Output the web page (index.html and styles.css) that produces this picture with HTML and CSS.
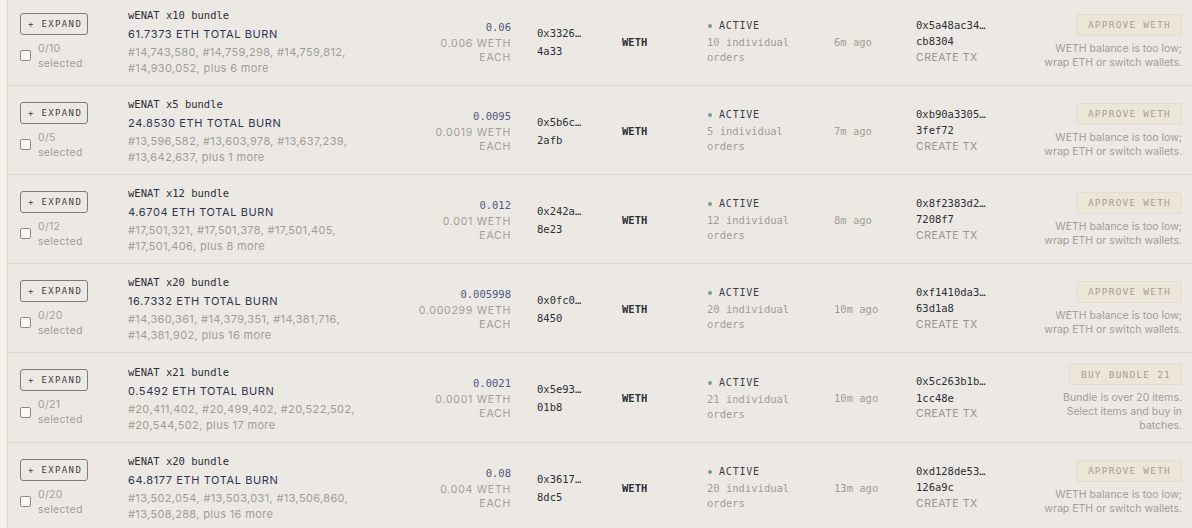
FILE: index.html
```html
<!DOCTYPE html>
<html lang="en">
<head>
<meta charset="utf-8">
<title>Bundles</title>
<link rel="stylesheet" href="styles.css">
</head>
<body>
<div class="page">
  <div class="rail"></div>
  <div class="list">

    <div class="row">
      <div class="c-sel">
        <button class="expand">+ EXPAND</button>
        <label class="pick"><input type="checkbox"><span class="pick-text"><span>0/10</span><span>selected</span></span></label>
      </div>
      <div class="c-name">
        <div class="title">wENAT x10 bundle</div>
        <div class="burn">61.7373 ETH TOTAL BURN</div>
        <div class="ids">#14,743,580, #14,759,298, #14,759,812, #14,930,052, plus 6 more</div>
      </div>
      <div class="c-price">
        <div class="price">0.06</div>
        <div class="each"><span>0.006 WETH</span><span>EACH</span></div>
      </div>
      <div class="c-addr"><span>0x3326…</span><span>4a33</span></div>
      <div class="c-cur">WETH</div>
      <div class="c-status">
        <div class="status"><i class="dot"></i>ACTIVE</div>
        <div class="orders">10 individual orders</div>
      </div>
      <div class="c-time">6m ago</div>
      <div class="c-tx"><span>0x5a48ac34…</span><span>cb8304</span><span class="create">CREATE TX</span></div>
      <div class="c-act">
        <button class="action">APPROVE WETH</button>
        <p class="note">WETH balance is too low; wrap ETH or switch wallets.</p>
      </div>
    </div>

    <div class="row">
      <div class="c-sel">
        <button class="expand">+ EXPAND</button>
        <label class="pick"><input type="checkbox"><span class="pick-text"><span>0/5</span><span>selected</span></span></label>
      </div>
      <div class="c-name">
        <div class="title">wENAT x5 bundle</div>
        <div class="burn">24.8530 ETH TOTAL BURN</div>
        <div class="ids">#13,596,582, #13,603,978, #13,637,239, #13,642,637, plus 1 more</div>
      </div>
      <div class="c-price">
        <div class="price">0.0095</div>
        <div class="each"><span>0.0019 WETH</span><span>EACH</span></div>
      </div>
      <div class="c-addr"><span>0x5b6c…</span><span>2afb</span></div>
      <div class="c-cur">WETH</div>
      <div class="c-status">
        <div class="status"><i class="dot"></i>ACTIVE</div>
        <div class="orders">5 individual orders</div>
      </div>
      <div class="c-time">7m ago</div>
      <div class="c-tx"><span>0xb90a3305…</span><span>3fef72</span><span class="create">CREATE TX</span></div>
      <div class="c-act">
        <button class="action">APPROVE WETH</button>
        <p class="note">WETH balance is too low; wrap ETH or switch wallets.</p>
      </div>
    </div>

    <div class="row">
      <div class="c-sel">
        <button class="expand">+ EXPAND</button>
        <label class="pick"><input type="checkbox"><span class="pick-text"><span>0/12</span><span>selected</span></span></label>
      </div>
      <div class="c-name">
        <div class="title">wENAT x12 bundle</div>
        <div class="burn">4.6704 ETH TOTAL BURN</div>
        <div class="ids">#17,501,321, #17,501,378, #17,501,405, #17,501,406, plus 8 more</div>
      </div>
      <div class="c-price">
        <div class="price">0.012</div>
        <div class="each"><span>0.001 WETH</span><span>EACH</span></div>
      </div>
      <div class="c-addr"><span>0x242a…</span><span>8e23</span></div>
      <div class="c-cur">WETH</div>
      <div class="c-status">
        <div class="status"><i class="dot"></i>ACTIVE</div>
        <div class="orders">12 individual orders</div>
      </div>
      <div class="c-time">8m ago</div>
      <div class="c-tx"><span>0x8f2383d2…</span><span>7208f7</span><span class="create">CREATE TX</span></div>
      <div class="c-act">
        <button class="action">APPROVE WETH</button>
        <p class="note">WETH balance is too low; wrap ETH or switch wallets.</p>
      </div>
    </div>

    <div class="row">
      <div class="c-sel">
        <button class="expand">+ EXPAND</button>
        <label class="pick"><input type="checkbox"><span class="pick-text"><span>0/20</span><span>selected</span></span></label>
      </div>
      <div class="c-name">
        <div class="title">wENAT x20 bundle</div>
        <div class="burn">16.7332 ETH TOTAL BURN</div>
        <div class="ids">#14,360,361, #14,379,351, #14,381,716, #14,381,902, plus 16 more</div>
      </div>
      <div class="c-price">
        <div class="price">0.005998</div>
        <div class="each"><span>0.000299 WETH</span><span>EACH</span></div>
      </div>
      <div class="c-addr"><span>0x0fc0…</span><span>8450</span></div>
      <div class="c-cur">WETH</div>
      <div class="c-status">
        <div class="status"><i class="dot"></i>ACTIVE</div>
        <div class="orders">20 individual orders</div>
      </div>
      <div class="c-time">10m ago</div>
      <div class="c-tx"><span>0xf1410da3…</span><span>63d1a8</span><span class="create">CREATE TX</span></div>
      <div class="c-act">
        <button class="action">APPROVE WETH</button>
        <p class="note">WETH balance is too low; wrap ETH or switch wallets.</p>
      </div>
    </div>

    <div class="row">
      <div class="c-sel">
        <button class="expand">+ EXPAND</button>
        <label class="pick"><input type="checkbox"><span class="pick-text"><span>0/21</span><span>selected</span></span></label>
      </div>
      <div class="c-name">
        <div class="title">wENAT x21 bundle</div>
        <div class="burn">0.5492 ETH TOTAL BURN</div>
        <div class="ids">#20,411,402, #20,499,402, #20,522,502, #20,544,502, plus 17 more</div>
      </div>
      <div class="c-price">
        <div class="price">0.0021</div>
        <div class="each"><span>0.0001 WETH</span><span>EACH</span></div>
      </div>
      <div class="c-addr"><span>0x5e93…</span><span>01b8</span></div>
      <div class="c-cur">WETH</div>
      <div class="c-status">
        <div class="status"><i class="dot"></i>ACTIVE</div>
        <div class="orders">21 individual orders</div>
      </div>
      <div class="c-time">10m ago</div>
      <div class="c-tx"><span>0x5c263b1b…</span><span>1cc48e</span><span class="create">CREATE TX</span></div>
      <div class="c-act">
        <button class="action">BUY BUNDLE 21</button>
        <p class="note">Bundle is over 20 items. Select items and buy in batches.</p>
      </div>
    </div>

    <div class="row">
      <div class="c-sel">
        <button class="expand">+ EXPAND</button>
        <label class="pick"><input type="checkbox"><span class="pick-text"><span>0/20</span><span>selected</span></span></label>
      </div>
      <div class="c-name">
        <div class="title">wENAT x20 bundle</div>
        <div class="burn">64.8177 ETH TOTAL BURN</div>
        <div class="ids">#13,502,054, #13,503,031, #13,506,860, #13,508,288, plus 16 more</div>
      </div>
      <div class="c-price">
        <div class="price">0.08</div>
        <div class="each"><span>0.004 WETH</span><span>EACH</span></div>
      </div>
      <div class="c-addr"><span>0x3617…</span><span>8dc5</span></div>
      <div class="c-cur">WETH</div>
      <div class="c-status">
        <div class="status"><i class="dot"></i>ACTIVE</div>
        <div class="orders">20 individual orders</div>
      </div>
      <div class="c-time">13m ago</div>
      <div class="c-tx"><span>0xd128de53…</span><span>126a9c</span><span class="create">CREATE TX</span></div>
      <div class="c-act">
        <button class="action">APPROVE WETH</button>
        <p class="note">WETH balance is too low; wrap ETH or switch wallets.</p>
      </div>
    </div>

  </div>
</div>
</body>
</html>
```

FILE: styles.css
```css
* { box-sizing: border-box; }

html, body {
  margin: 0;
  padding: 0;
  background: #ece9e4;
  overflow: hidden;
}

body {
  font-family: Inter, "Liberation Sans", sans-serif;
  color: #2b2f38;
}

.page {
  display: flex;
  min-height: 528px;
}

.rail {
  width: 8px;
  flex: none;
  background: #f4f1ea;
  border-right: 1px solid #dcd8cf;
}

.list {
  flex: 1;
  margin-top: -3px;
}

.row {
  display: grid;
  grid-template-columns: 108px 262px 121px 111px 85px 127px 82px 124px 142px;
  align-items: center;
  padding: 10px 10px 9px 12px;
  border-bottom: 1px solid #dcd8d0;
}

.title, .price, .c-addr, .c-cur, .status, .orders, .c-time, .c-tx span, .expand, .action {
  font-family: "DejaVu Sans Mono", "Liberation Mono", monospace;
}

/* column 1 */
.c-sel {
  display: flex;
  flex-direction: column;
  align-items: flex-start;
}

.expand {
  height: 22px;
  width: 68px;
  padding: 0 0 0 7px;
  text-align: left;
  background: transparent;
  border: 1px solid #7c7c80;
  border-radius: 3px;
  font-size: 9px;
  letter-spacing: 1.35px;
  color: #3b3f4a;
}

.pick {
  display: flex;
  align-items: center;
  gap: 7px;
  margin-top: 6px;
}

.pick input {
  appearance: none;
  -webkit-appearance: none;
  margin: 0;
  width: 11px;
  height: 11px;
  background: #fbfaf8;
  border: 1px solid #8d8b88;
  border-radius: 2px;
}

.pick-text {
  display: flex;
  flex-direction: column;
  font-size: 10.5px;
  line-height: 15px;
  color: #9f9d98;
  letter-spacing: 0.3px;
}

/* column 2 */
.title {
  font-size: 10.5px;
  line-height: 16px;
  color: #2b2f38;
}

.burn {
  margin-top: 3px;
  font-size: 11px;
  line-height: 16px;
  letter-spacing: 0.6px;
  color: #2d3654;
}

.ids {
  margin-top: 2px;
  max-width: 240px;
  font-size: 11px;
  line-height: 16px;
  letter-spacing: 0.35px;
  color: #9f9d98;
}

/* column 3 */
.c-price {
  text-align: right;
}

.price {
  font-size: 10.5px;
  line-height: 16px;
  color: #4d5884;
}

.each {
  display: flex;
  flex-direction: column;
  margin-top: 2px;
  font-size: 10.5px;
  line-height: 14px;
  letter-spacing: 0.75px;
  color: #9f9d98;
}

/* column 4 */
.c-addr {
  display: flex;
  flex-direction: column;
  padding-left: 26px;
  font-size: 10.5px;
  line-height: 18px;
  color: #2b2f38;
}

/* column 5 */
.c-cur {
  font-size: 10.5px;
  font-weight: bold;
  color: #2b2f38;
}

/* column 6 */
.status {
  display: flex;
  align-items: center;
  font-size: 10px;
  line-height: 16px;
  letter-spacing: 0.8px;
  color: #3a3f48;
}

.dot {
  width: 4px;
  height: 4px;
  border-radius: 50%;
  background: #7d9c88;
  margin: 0 7px 0 1px;
}

.orders {
  width: 100px;
  margin-top: 1px;
  font-size: 10.5px;
  line-height: 15px;
  color: #9f9d98;
}

/* column 7 */
.c-time {
  font-size: 10.5px;
  color: #9f9d98;
}

/* column 8 */
.c-tx {
  display: flex;
  flex-direction: column;
  font-size: 10.5px;
  line-height: 16.5px;
  color: #2b2f38;
}

.c-tx .create {
  font-family: Inter, "Liberation Sans", sans-serif;
  font-size: 10.5px;
  letter-spacing: 0.5px;
  color: #93918c;
}

/* column 9 */
.c-act {
  display: flex;
  flex-direction: column;
  align-items: flex-end;
}

.action {
  height: 22px;
  padding: 0 10px 0 11px;
  background: #ebe6d8;
  border: 1px solid #e2ddd0;
  border-radius: 3px;
  font-size: 9.5px;
  letter-spacing: 1.2px;
  color: #a6a18e;
}

.note {
  width: 148px;
  margin: 6px 0 0;
  text-align: right;
  font-size: 10.5px;
  line-height: 14px;
  color: #9f9d98;
}
```
